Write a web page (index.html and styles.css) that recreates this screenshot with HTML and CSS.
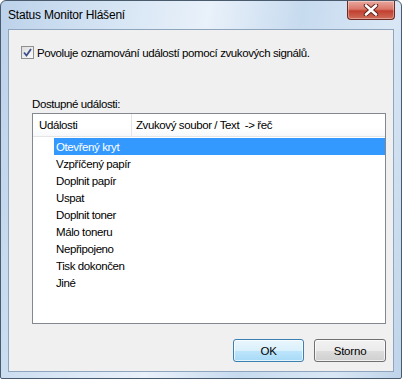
FILE: index.html
```html
<!DOCTYPE html>
<html>
<head>
	<title>Status Monitor Hlášení</title>
	<meta charset="utf-8">
	<link rel="stylesheet" href="styles.css">
</head>
<body>
	<div class="window">
		<div class="titlebar">
			<span class="title">Status Monitor Hlášení</span>
			<div class="close">
				<svg width="16" height="12" viewBox="0 0 16 12">
					<path d="M3 1.5 L13 10.5 M13 1.5 L3 10.5" stroke="#5a1f18" stroke-width="4.4" stroke-linecap="round"/>
					<path d="M3 1.5 L13 10.5 M13 1.5 L3 10.5" stroke="#fff" stroke-width="2.6" stroke-linecap="round"/>
				</svg>
			</div>
		</div>
		<div class="client">
			<label class="check">
				<span class="box">
					<svg width="9" height="9" viewBox="0 0 9 9"><path d="M1 4.5 L3.5 7.5 L8 1" stroke="#3d4f8a" stroke-width="1.8" fill="none"/></svg>
				</span>
				Povoluje oznamování událostí pomocí zvukových signálů.
			</label>
			<div class="group-label">Dostupné události:</div>
			<div class="listview">
				<div class="header">
					<div class="col col1">Události</div>
					<div class="col col2">Zvukový soubor / Text&nbsp; -&gt; řeč</div>
				</div>
				<ul class="rows">
					<li class="on">Otevřený kryt</li>
					<li>Vzpříčený papír</li>
					<li>Doplnit papír</li>
					<li>Uspat</li>
					<li>Doplnit toner</li>
					<li>Málo toneru</li>
					<li>Nepřipojeno</li>
					<li>Tisk dokončen</li>
					<li>Jiné</li>
				</ul>
			</div>
			<div class="buttons">
				<button class="btn default">OK</button>
				<button class="btn">Storno</button>
			</div>
		</div>
	</div>
</body>
</html>
```

FILE: styles.css
```css
*{margin: 0;padding: 0;box-sizing: border-box;}
html,body{width: 100%;height: 100%;}
body{font-family: "Liberation Sans", "DejaVu Sans", sans-serif;font-size: 11.5px;letter-spacing: -0.4px;color: #000;background: #fff;}
ul li{list-style: none;}

.window{width: 402px;height: 379px;display: flex;flex-direction: column;padding: 0 7px 6px 7px;border: 1px solid #4b5b6e;border-radius: 6px 6px 2px 2px;background: linear-gradient(100deg, #bcd2ea 0%, #d6e5f4 25%, #e9f1fa 45%, #c7dbef 65%, #d9e7f5 85%, #bfd4ea 100%);}
.titlebar{height: 28px;display: flex;justify-content: space-between;align-items: flex-start;}
.title{margin-top: 7px;font-size: 12px;letter-spacing: -0.2px;color: #000;}
.close{width: 48px;height: 19px;margin-right: -1px;display: flex;align-items: center;justify-content: center;border: 1px solid #6e2a22;border-top: none;border-radius: 0 0 4px 4px;background: linear-gradient(#e9a89e 0%, #d9776a 45%, #c2402f 55%, #cf6d5a 100%);box-shadow: inset 0 0 0 1px rgba(255,255,255,.35);}

.client{flex: 1;display: flex;flex-direction: column;background: #f0f0f0;border: 1px solid #8fa4bd;padding: 0 7px 8px 12px;}
.check{display: flex;align-items: center;margin-top: 16px;height: 13px;}
.box{width: 13px;height: 13px;margin-right: 3px;border: 1px solid #8e8f8f;background: linear-gradient(135deg, #dcdcdc, #fbfbfb);display: flex;align-items: center;justify-content: center;}
.group-label{margin-top: 39px;margin-left: 11px;height: 15px;}
.listview{margin-left: 11px;height: 211px;border: 1px solid #828790;background: #fff;display: flex;flex-direction: column;}
.header{height: 23px;display: flex;border-bottom: 1px solid #e5e5e5;background: linear-gradient(#fff, #fff 60%, #f7f8fa);}
.col{line-height: 23px;padding-left: 6px;}
.col1{width: 99px;border-right: 1px solid #e5e5e5;}
.col2{flex: 1;padding-left: 4px;}
.rows{padding-top: 1px;}
.rows li{height: 17px;line-height: 18px;margin-left: 21px;padding-left: 2px;}
.rows .on{background: #3399ff;color: #fff;}

.buttons{display: flex;justify-content: flex-end;gap: 9px;margin-top: 15px;}
.btn{width: 72px;height: 23px;font-family: inherit;font-size: 11.5px;letter-spacing: -0.2px;color: #000;border: 1px solid #707070;border-radius: 3px;background: linear-gradient(#f2f2f2 0%, #ebebeb 50%, #dddddd 51%, #cfcfcf 100%);box-shadow: inset 0 0 0 1px rgba(255,255,255,.7);}
.btn.default{width: 71px;margin-right: 1px;border-color: #3c7fb1;background: linear-gradient(#eaf6fd 0%, #d9f0fc 50%, #bee6fd 51%, #a7d9f5 100%);}
```
